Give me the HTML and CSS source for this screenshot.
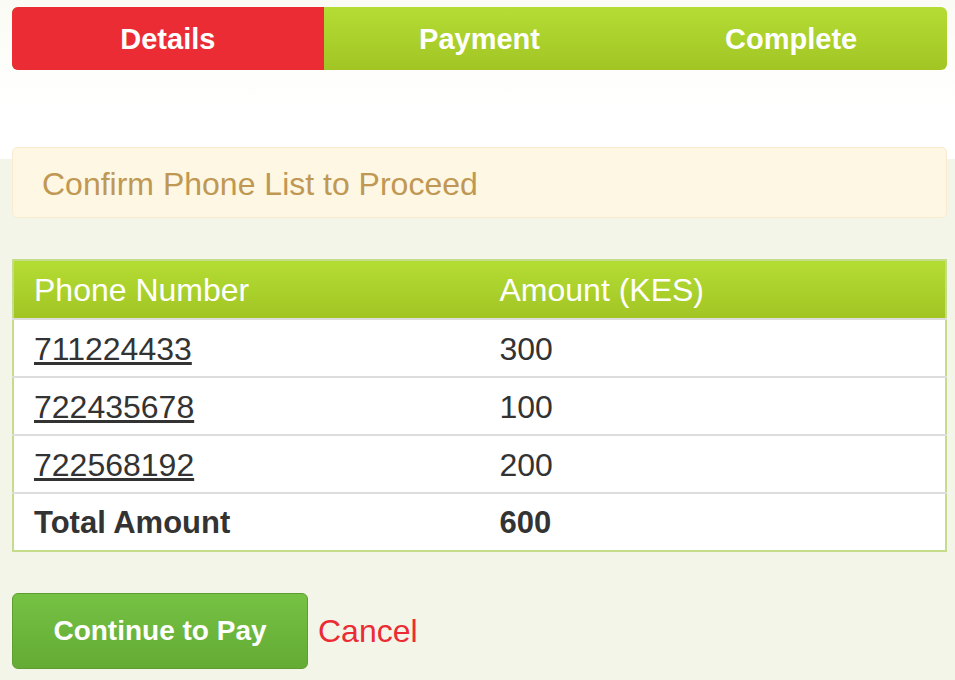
FILE: index.html
```html
<!DOCTYPE html>
<html lang="en">
<head>
    <meta charset="UTF-8">
    <meta name="viewport" content="width=device-width, initial-scale=1.0">
    <title>Confirm Phone List</title>
    <link rel="stylesheet" href="styles.css">
</head>
<body>
    <header class="top">
        <!-- Checkout steps -->
        <ul class="steps">
            <li class="step active">Details</li>
            <li class="step">Payment</li>
            <li class="step">Complete</li>
        </ul>
    </header>

    <div class="container">
        <div class="alert">Confirm Phone List to Proceed</div>

        <table class="phone-list">
            <thead>
                <tr>
                    <th>Phone Number</th>
                    <th>Amount (KES)</th>
                </tr>
            </thead>
            <tbody>
                <tr>
                    <td><a href="#">711224433</a></td>
                    <td>300</td>
                </tr>
                <tr>
                    <td><a href="#">722435678</a></td>
                    <td>100</td>
                </tr>
                <tr>
                    <td><a href="#">722568192</a></td>
                    <td>200</td>
                </tr>
                <tr class="total">
                    <td>Total Amount</td>
                    <td>600</td>
                </tr>
            </tbody>
        </table>

        <div class="actions">
            <button type="button" class="btn-pay">Continue to Pay</button>
            <a href="#" class="cancel">Cancel</a>
        </div>
    </div>
</body>
</html>
```

FILE: styles.css
```css
body {
    font-family: "Liberation Sans", Arial, sans-serif;
    margin: 0;
    padding: 0;
    background-color: #f4f5e9;
    color: #333;
}

.top {
    height: 159px;
    padding: 7px 8px 0 12px;
    box-sizing: border-box;
    background: linear-gradient(to bottom, #fafbf4 0, #ffffff 110px);
}

.steps {
    list-style: none;
    margin: 0;
    padding: 0;
    display: flex;
    height: 63px;
    border-radius: 6px;
    overflow: hidden;
    background: linear-gradient(to bottom, #b4dd34, #a2c524);
}

.step {
    flex: 1;
    display: flex;
    align-items: center;
    justify-content: center;
    color: white;
    font-size: 29px;
    font-weight: bold;
    padding-top: 2px;
}

.step.active {
    background-color: #eb2c35;
}

.container {
    padding: 0 8px 0 12px;
}

.alert {
    margin-top: -12px;
    height: 71px;
    box-sizing: border-box;
    padding: 3px 29px 0;
    display: flex;
    align-items: center;
    background-color: #fdf7e3;
    border: 1px solid #f9ebd0;
    border-radius: 5px;
    color: #c09853;
    font-size: 32px;
}

.phone-list {
    width: 100%;
    margin-top: 41px;
    border-collapse: collapse;
    border: 2px solid #c5dc8a;
    background-color: white;
    font-size: 32px;
    line-height: 1.1;
    table-layout: fixed;
}

.phone-list th {
    height: 55px;
    padding: 2px 20px 0;
    text-align: left;
    font-weight: normal;
    color: white;
    background: linear-gradient(to bottom, #b4dd34, #a2c524);
}

.phone-list td {
    height: 53px;
    padding: 3px 20px 0;
    border-top: 2px solid #dddddd;
}

.phone-list a {
    color: #333;
}

.phone-list .total td {
    font-weight: bold;
    font-size: 31px;
}

.actions {
    display: flex;
    align-items: center;
    gap: 10px;
    margin-top: 41px;
}

.btn-pay {
    width: 296px;
    height: 76px;
    font-family: inherit;
    font-size: 28px;
    font-weight: bold;
    color: white;
    background: linear-gradient(to bottom, #75c244, #64ab34);
    border: 1px solid #5e9e31;
    border-radius: 6px;
    cursor: pointer;
}

.cancel {
    color: #eb2c35;
    font-size: 32px;
    text-decoration: none;
}
```
